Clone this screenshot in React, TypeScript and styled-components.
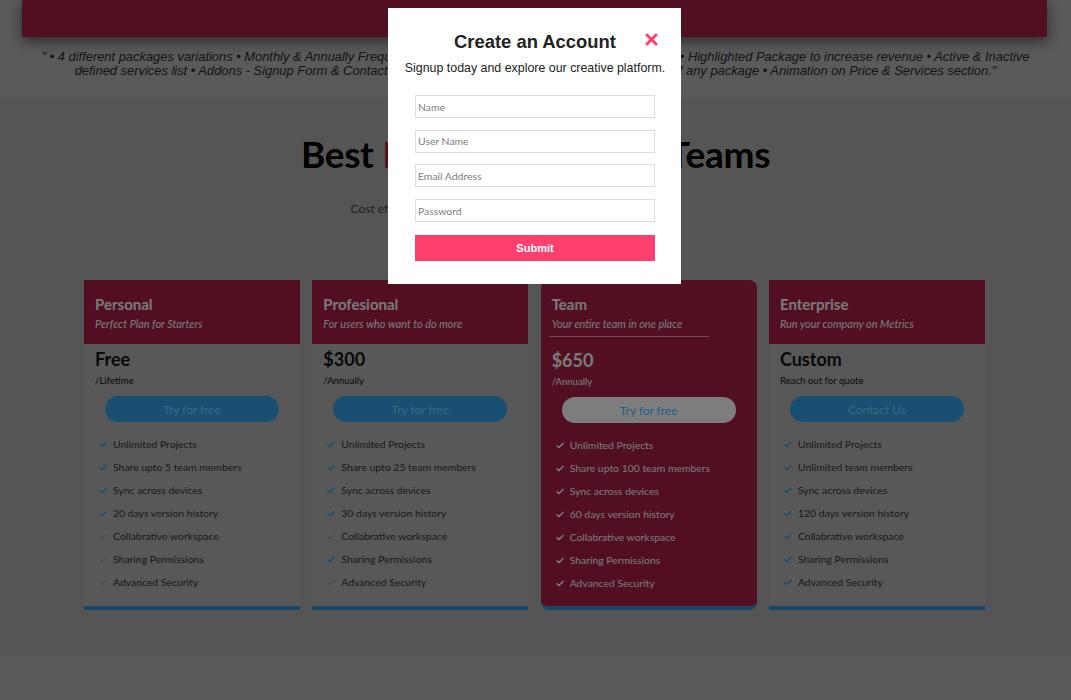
import styled, { createGlobalStyle, css } from 'styled-components';

const red = '#961c3e';
const blue = '#2f92d0';
const barBlue = '#2b84c0';
const pink = '#ff406e';
const light = '#e2e2e2';

const GlobalStyle = createGlobalStyle`
  html, body {
    margin: 0;
    padding: 0;
    height: 100%;
  }
  body {
    background: #a6a6a6;
    font-family: 'Lato', 'Liberation Sans', sans-serif;
    overflow: hidden;
  }
  * {
    box-sizing: border-box;
  }
`;

interface Feature {
  label: string;
  on: boolean;
}

interface Plan {
  name: string;
  tagline: string;
  price: string;
  period: string;
  cta: string;
  highlight?: boolean;
  features: Feature[];
}

const plans: Plan[] = [
  {
    name: 'Personal',
    tagline: 'Perfect Plan for Starters',
    price: 'Free',
    period: '/Lifetime',
    cta: 'Try for free',
    features: [
      { label: 'Unlimited Projects', on: true },
      { label: 'Share upto 5 team members', on: true },
      { label: 'Sync across devices', on: true },
      { label: '20 days version history', on: true },
      { label: 'Collabrative workspace', on: false },
      { label: 'Sharing Permissions', on: false },
      { label: 'Advanced Security', on: false },
    ],
  },
  {
    name: 'Profesional',
    tagline: 'For users who want to do more',
    price: '$300',
    period: '/Annually',
    cta: 'Try for free',
    features: [
      { label: 'Unlimited Projects', on: true },
      { label: 'Share upto 25 team members', on: true },
      { label: 'Sync across devices', on: true },
      { label: '30 days version history', on: true },
      { label: 'Collabrative workspace', on: false },
      { label: 'Sharing Permissions', on: true },
      { label: 'Advanced Security', on: false },
    ],
  },
  {
    name: 'Team',
    tagline: 'Your entire team in one place',
    price: '$650',
    period: '/Annually',
    cta: 'Try for free',
    highlight: true,
    features: [
      { label: 'Unlimited Projects', on: true },
      { label: 'Share upto 100 team members', on: true },
      { label: 'Sync across devices', on: true },
      { label: '60 days version history', on: true },
      { label: 'Collabrative workspace', on: true },
      { label: 'Sharing Permissions', on: true },
      { label: 'Advanced Security', on: true },
    ],
  },
  {
    name: 'Enterprise',
    tagline: 'Run your company on Metrics',
    price: 'Custom',
    period: 'Reach out for quote',
    cta: 'Contact Us',
    features: [
      { label: 'Unlimited Projects', on: true },
      { label: 'Unlimited team members', on: true },
      { label: 'Sync across devices', on: true },
      { label: '120 days version history', on: true },
      { label: 'Collabrative workspace', on: true },
      { label: 'Sharing Permissions', on: true },
      { label: 'Advanced Security', on: true },
    ],
  },
];

const Banner = styled.header`
  height: 37px;
  margin: 0 24px 0 22px;
  background: ${red};
  box-shadow: 0 4px 14px rgba(0, 0, 0, 0.55);
`;

const Intro = styled.p`
  margin: 13px 0 0;
  font-family: 'Liberation Sans', Arial, sans-serif;
  font-style: italic;
  font-size: 12.9px;
  line-height: 14px;
  color: #252525;
  text-align: center;
`;

const Section = styled.section`
  margin-top: 20px;
  padding: 34px 0 45px;
  background: #9d9d9d;
`;

const Heading = styled.h1`
  margin: 0;
  font-size: 37px;
  line-height: 44px;
  font-weight: 700;
  color: #000;
  text-align: center;
  letter-spacing: -0.3px;

  span {
    color: ${red};
    letter-spacing: 1px;
  }
`;

const Lead = styled.p`
  width: 370px;
  margin: 25px auto 0;
  font-size: 12px;
  line-height: 16px;
  color: #383838;
`;

const Cards = styled.div`
  display: flex;
  justify-content: center;
  gap: 12.3px;
  margin-top: 63px;
  padding-right: 2px;
`;

const Card = styled.div<{ $highlight?: boolean }>`
  width: 216px;
  background: #a3a3a3;
  border-bottom: 4px solid ${barBlue};
  padding-bottom: 10px;

  ${({ $highlight }) =>
    $highlight &&
    css`
      background: ${red};
      border-radius: 8px;
      padding-bottom: 12px;
    `}
`;

const CardHead = styled.div<{ $highlight?: boolean }>`
  height: 64px;
  padding: 15px 11px 0;
  background: ${red};
  color: ${light};

  ${({ $highlight }) =>
    $highlight &&
    css`
      background: transparent;
      border-radius: 8px 8px 0 0;
    `}
`;

const PlanName = styled.h3`
  margin: 0;
  font-size: 15px;
  line-height: 18px;
  font-weight: 700;
`;

const Tagline = styled.p<{ $highlight?: boolean }>`
  margin: 4px 0 0;
  font-size: 10.9px;
  line-height: 14px;
  font-style: italic;

  ${({ $highlight }) =>
    $highlight &&
    css`
      width: 160px;
      margin-left: -3px;
      padding: 0 0 5px 3px;
      border-bottom: 1px solid rgba(255, 255, 255, 0.5);
    `}
`;

const CardBody = styled.div<{ $highlight?: boolean }>`
  padding: 4px 11px 0;
  color: ${({ $highlight }) => ($highlight ? light : '#111')};
  ${({ $highlight }) => $highlight && 'padding-top: 5px;'}
`;

const Price = styled.div`
  font-size: 18px;
  line-height: 22px;
  font-weight: 700;
`;

const Period = styled.div`
  margin-top: 4px;
  font-size: 9.6px;
  line-height: 13px;
`;

const Cta = styled.button<{ $highlight?: boolean }>`
  display: block;
  width: 174px;
  height: 26px;
  margin: 9px auto 0;
  border: none;
  border-radius: 13px;
  background: ${blue};
  color: #62c8f0;
  font-family: 'Lato', sans-serif;
  font-size: 11.9px;

  ${({ $highlight }) =>
    $highlight &&
    css`
      background: #e8e8e8;
      color: #3ab2f2;
    `}
`;

const Features = styled.ul`
  list-style: none;
  margin: 10px 0 0;
  padding: 0 0 0 4px;
`;

const FeatureRow = styled.li<{ $highlight?: boolean }>`
  display: flex;
  align-items: center;
  gap: 6px;
  height: 23px;
  font-size: 10.4px;
  color: ${({ $highlight }) => ($highlight ? light : '#2e2e2e')};
`;

const Check = ({ color }: { color: string }) => (
  <svg width="8" height="7" viewBox="0 0 8 7" style={{ marginTop: 2 }}>
    <polyline
      points="1,3.8 3,5.6 7,1.4"
      fill="none"
      stroke={color}
      strokeWidth="1.5"
      strokeLinecap="round"
      strokeLinejoin="round"
    />
  </svg>
);

const Overlay = styled.div`
  position: fixed;
  inset: 0;
  background: rgba(0, 0, 0, 0.46);
  z-index: 10;
`;

const Modal = styled.div`
  position: fixed;
  top: 8px;
  left: 388px;
  width: 293px;
  padding: 23px 26px 23px 27px;
  background: #fff;
  z-index: 11;
  font-family: 'Liberation Sans', Arial, sans-serif;
  text-align: center;
`;

const ModalTitle = styled.h2`
  margin: 0;
  font-size: 18.4px;
  line-height: 22px;
  font-weight: 700;
  color: #222;
`;

const Close = styled.button`
  position: absolute;
  top: 25px;
  right: 23px;
  padding: 0;
  border: none;
  background: none;
  display: flex;
`;

const ModalLead = styled.p`
  margin: 7px -14px 0;
  font-size: 12.4px;
  line-height: 16px;
  color: #222;
  white-space: nowrap;
`;

const Form = styled.form`
  display: flex;
  flex-direction: column;
  gap: 11.7px;
  margin-top: 19px;
`;

const Input = styled.input`
  width: 240px;
  height: 23px;
  padding: 0 2px;
  border: 1.5px solid #dcdcdc;
  font-family: 'Lato', sans-serif;
  font-size: 10.4px;
  outline: none;

  &::placeholder {
    color: #7c7c7c;
  }
`;

const Submit = styled.button`
  width: 240px;
  height: 26px;
  margin-top: 1px;
  border: none;
  background: ${pink};
  color: #fff;
  font-family: 'Liberation Sans', Arial, sans-serif;
  font-weight: 700;
  font-size: 11px;
`;

export default function App() {
  return (
    <>
      <GlobalStyle />
      <Banner />
      <Intro>
        " • 4 different packages variations • Monthly &amp; Annually Frequency Switch • Custom
        Ribbons • Price Description • Highlighted Package to increase revenue • Active &amp;
        Inactive
        <br />
        defined services list • Addons - Signup Form &amp; Contact Us Form • Custom Button Text
        &amp; Link on Header of any package • Animation on Price &amp; Services section."
      </Intro>
      <Section>
        <Heading>
          Best <span>Pricing Plans</span> for Teams
        </Heading>
        <Lead>Cost effective pricing plans for every team size.</Lead>
        <Cards>
          {plans.map((plan) => (
            <Card key={plan.name} $highlight={plan.highlight}>
              <CardHead $highlight={plan.highlight}>
                <PlanName>{plan.name}</PlanName>
                <Tagline $highlight={plan.highlight}>{plan.tagline}</Tagline>
              </CardHead>
              <CardBody $highlight={plan.highlight}>
                <Price>{plan.price}</Price>
                <Period>{plan.period}</Period>
                <Cta $highlight={plan.highlight}>{plan.cta}</Cta>
                <Features>
                  {plan.features.map((f) => (
                    <FeatureRow key={f.label} $highlight={plan.highlight}>
                      <Check color={plan.highlight ? light : f.on ? blue : '#8e8e8e'} />
                      {f.label}
                    </FeatureRow>
                  ))}
                </Features>
              </CardBody>
            </Card>
          ))}
        </Cards>
      </Section>
      <Overlay />
      <Modal>
        <ModalTitle>Create an Account</ModalTitle>
        <Close aria-label="Close">
          <svg width="13" height="13" viewBox="0 0 13 13">
            <path
              d="M2 2 L11 11 M11 2 L2 11"
              stroke={pink}
              strokeWidth="3"
              strokeLinecap="round"
            />
          </svg>
        </Close>
        <ModalLead>Signup today and explore our creative platform.</ModalLead>
        <Form onSubmit={(e) => e.preventDefault()}>
          <Input placeholder="Name" />
          <Input placeholder="User Name" />
          <Input placeholder="Email Address" />
          <Input type="password" placeholder="Password" />
          <Submit type="submit">Submit</Submit>
        </Form>
      </Modal>
    </>
  );
}
